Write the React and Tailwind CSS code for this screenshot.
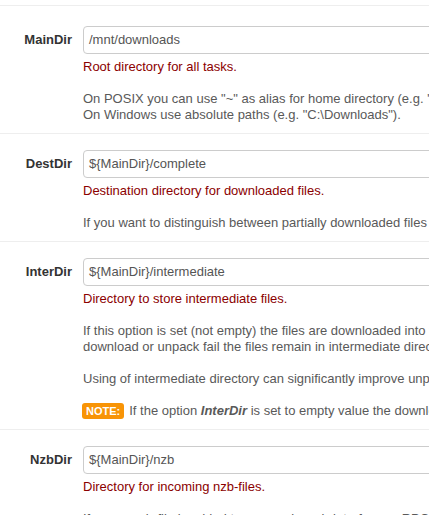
import React from 'react';

const options = [
    {
        name: 'MainDir',
        value: '/mnt/downloads',
        help: 'Root directory for all tasks.',
        paragraphs: [
            [
                'On POSIX you can use "~" as alias for home directory (e.g. "~/downloads").',
                'On Windows use absolute paths (e.g. "C:\\Downloads").',
            ],
        ],
    },
    {
        name: 'DestDir',
        value: '${MainDir}/complete',
        help: 'Destination directory for downloaded files.',
        paragraphs: [
            ['If you want to distinguish between partially downloaded files and completed downloads, use also option InterDir.'],
        ],
    },
    {
        name: 'InterDir',
        value: '${MainDir}/intermediate',
        help: 'Directory to store intermediate files.',
        paragraphs: [
            [
                'If this option is set (not empty) the files are downloaded into this directory first. After successful download of nzb-file the files are moved to destination directory (option DestDir). If',
                'download or unpack fail the files remain in intermediate directory.',
            ],
            ['Using of intermediate directory can significantly improve unpack performance if you can put intermediate directory (option InterDir) and destination directory (option DestDir) on separate physical hard drives.'],
        ],
        note: true,
    },
    {
        name: 'NzbDir',
        value: '${MainDir}/nzb',
        help: 'Directory for incoming nzb-files.',
        paragraphs: [
            ['If a new nzb-file is added to queue via web-interface or RPC-API, it is saved into this directory and then processed by extension scripts.'],
        ],
    },
];

function OptionRow({ option, first }) {
    return (
        <div className={`flex border-t border-[#eeeeee] pb-[10px] ${first ? 'pt-5' : 'pt-4'}`}>
            <div className="w-[72px] shrink-0 text-right font-bold text-[13px] leading-[28px] text-[#333333]">
                {option.name}
            </div>
            <div className="ml-[11px] flex-1">
                <div className="w-[420px] h-[28px] border border-[#cccccc] rounded-[4px] px-[5px] text-[13px] leading-[26px] text-[#555555] bg-white">
                    {option.value}
                </div>
                <p className="mt-[5px] text-[13px] leading-[16px] text-[#8b0000] whitespace-nowrap">{option.help}</p>
                {option.paragraphs.map((lines, i) => (
                    <p key={i} className="mt-[16px] text-[13px] leading-[16px] text-[#595959] whitespace-nowrap">
                        {lines.map((line, j) => (
                            <span key={j} className="block">{line}</span>
                        ))}
                    </p>
                ))}
                {option.note && (
                    <p className="mt-[16px] text-[13px] leading-[16px] text-[#595959] whitespace-nowrap flex items-center">
                        <span className="bg-[#f89406] text-white font-bold text-[11px] leading-[16px] rounded-[3px] px-[4px] mr-[5px] -ml-[1px]">
                            NOTE:
                        </span>
                        <span>
                            If the option <b><i>InterDir</i></b> is set to empty value the downloaded files are put directly to destination directory.
                        </span>
                    </p>
                )}
            </div>
        </div>
    );
}

export default function App() {
    return (
        <div className="w-[429px] h-[515px] overflow-hidden bg-white pt-[5px]" style={{ fontFamily: '"Liberation Sans", Arial, sans-serif' }}>
            {options.map((opt, i) => (
                <OptionRow key={opt.name} option={opt} first={i === 0} />
            ))}
        </div>
    );
}
